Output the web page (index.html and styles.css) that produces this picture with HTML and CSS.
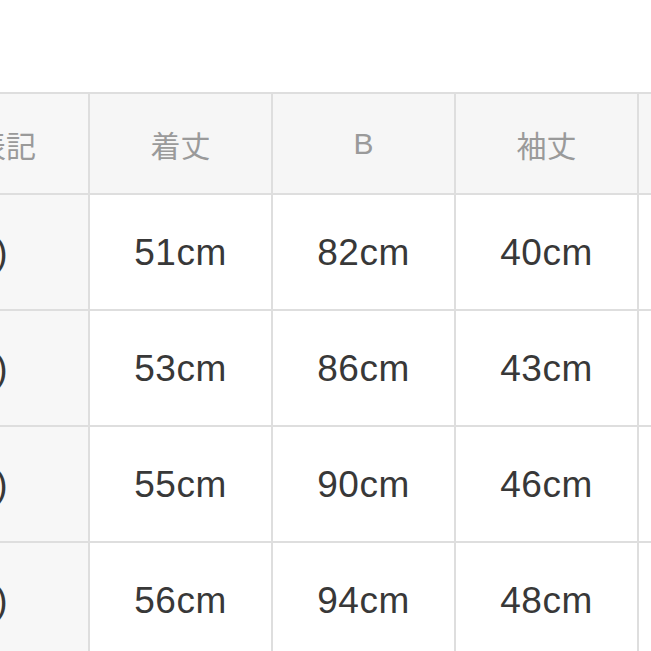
FILE: index.html
```html
<!DOCTYPE html>
<html lang="ja">
<head>
<meta charset="utf-8">
<link rel="stylesheet" href="styles.css">
</head>
<body>
<div class="page">
  <div class="size-table">
    <div class="cell head label">サイズ表記</div>
    <div class="cell head">着丈</div>
    <div class="cell head latin">B</div>
    <div class="cell head">袖丈</div>
    <div class="cell head">肩幅</div>

    <div class="cell label">1 (S)</div>
    <div class="cell">51cm</div>
    <div class="cell">82cm</div>
    <div class="cell">40cm</div>
    <div class="cell">36cm</div>

    <div class="cell label">2 (M)</div>
    <div class="cell">53cm</div>
    <div class="cell">86cm</div>
    <div class="cell">43cm</div>
    <div class="cell">37cm</div>

    <div class="cell label">3 (S)</div>
    <div class="cell">55cm</div>
    <div class="cell">90cm</div>
    <div class="cell">46cm</div>
    <div class="cell">38cm</div>

    <div class="cell label">4 (XL)</div>
    <div class="cell">56cm</div>
    <div class="cell">94cm</div>
    <div class="cell">48cm</div>
    <div class="cell">39cm</div>
  </div>
</div>
</body>
</html>
```
FILE: styles.css
```css
html, body {
  margin: 0;
  padding: 0;
  background: #ffffff;
  overflow: hidden;
}

.page {
  width: 651px;
  height: 651px;
  padding-top: 92px;
  box-sizing: border-box;
  overflow: hidden;
}

.size-table {
  margin-left: -168px;
  width: max-content;
  display: grid;
  grid-template-columns: 256px repeat(4, 181px);
  grid-template-rows: 99px repeat(4, 114px);
  gap: 2px;
  padding: 2px 0 2px 0;
  background: #dedede;
}

.cell {
  display: flex;
  align-items: center;
  justify-content: center;
  padding-top: 2px;
  background: #ffffff;
  color: #383838;
  font-family: "Liberation Sans", "Noto Sans CJK JP", sans-serif;
  font-size: 37px;
  letter-spacing: 0.5px;
}

.head {
  padding-top: 0;
  background: #f6f6f6;
  color: #9a9a9a;
  font-family: "Noto Sans CJK JP", sans-serif;
  font-size: 30px;
  letter-spacing: 0;
}

.head.latin {
  font-family: "Liberation Sans", sans-serif;
  font-size: 30px;
}

.label {
  background: #f7f7f7;
  justify-content: flex-end;
  padding-right: 80px;
}

.head.label {
  padding-right: 52px;
}
```
